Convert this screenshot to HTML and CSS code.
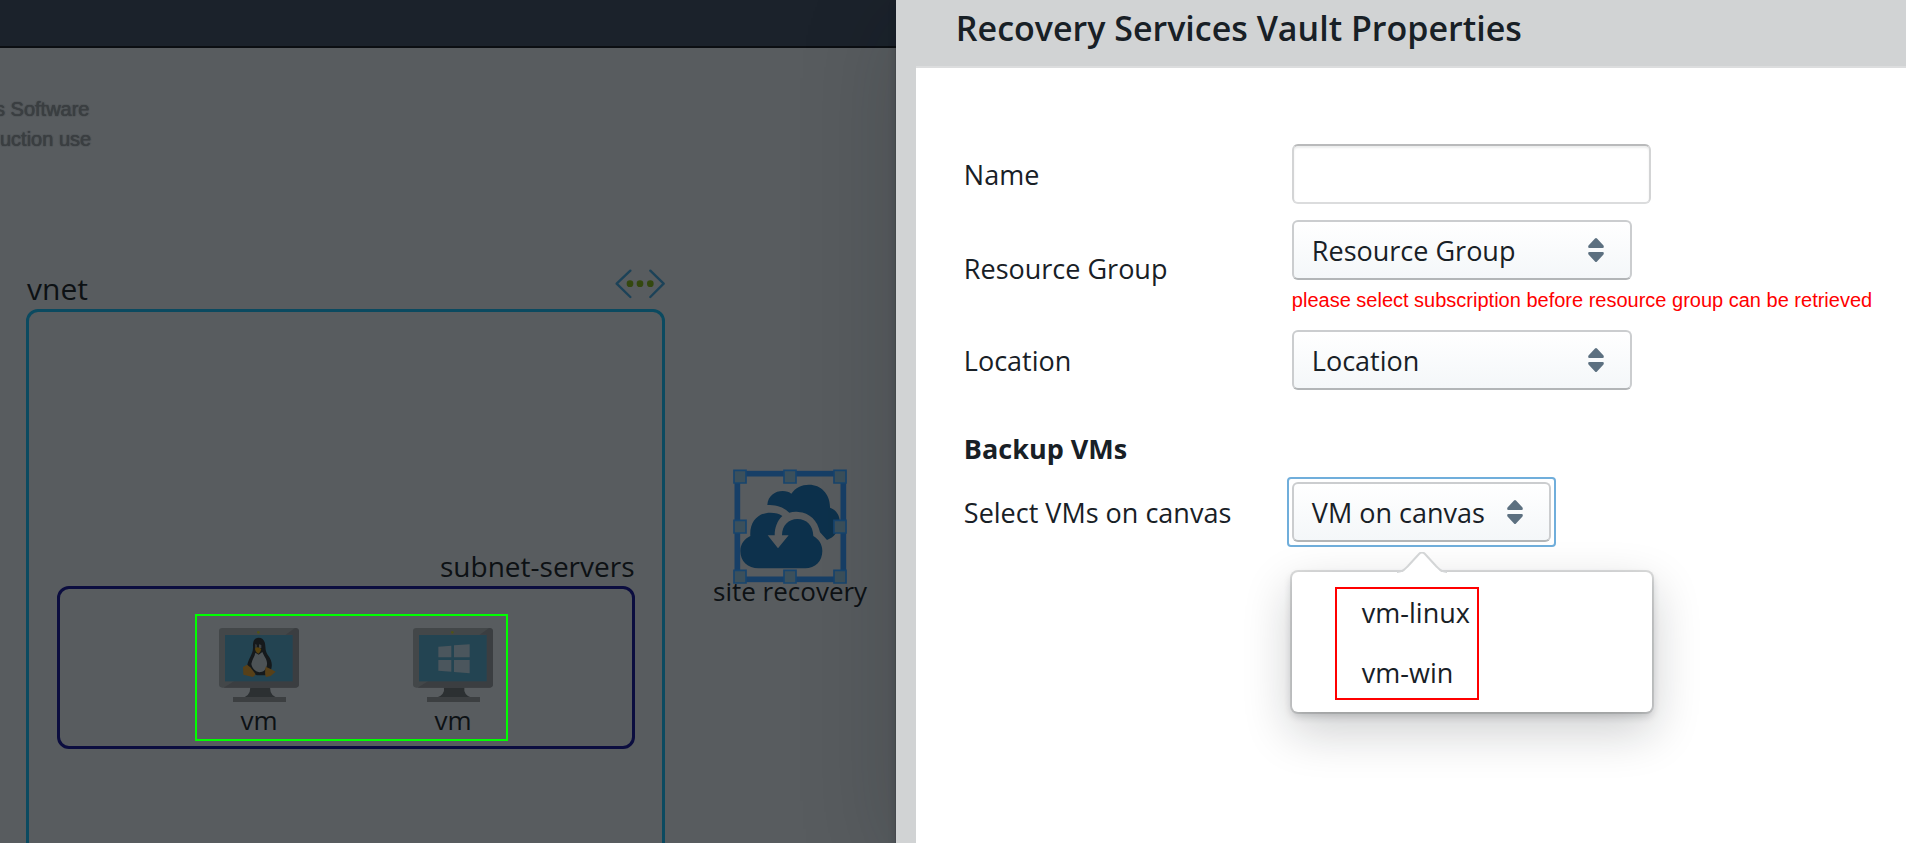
FILE: index.html
```html
<!DOCTYPE html>
<html lang="en">
<head>
<meta charset="utf-8">
<title>Recovery Services Vault Properties</title>
<link rel="stylesheet" href="styles.css">
</head>
<body>
<svg class="symbols" aria-hidden="true">
  <symbol id="caret" viewBox="0 0 16 24">
    <path d="M7 .6Q8-.4 9 .6L15.500 7.500Q16.500 10 14.500 10H1.500Q-.5 10 .5 7.500ZM7 23.400Q8 24.400 9 23.400L15.500 16.500Q16.500 14 14.500 14H1.500Q-.5 14 .5 16.500Z"/>
  </symbol>
  <symbol id="monitor" viewBox="0 0 240 222">
    <path fill="#2c3032" d="M93 176H154Q150 202 178 210H68Q97 202 93 176Z"/>
    <path fill="#3c3f41" d="M42 207H201V222H42Z"/>
    <rect fill="#434749" width="240" height="179" rx="10"/>
    <path fill="#3b3e41" d="M228 0Q240 0 240 12V167Q240 179 228 179H14L45 160H220V20H200Z"/>
    <rect fill="#234452" x="18" y="21" width="203" height="139"/>
    <circle fill="#505418" cx="118" cy="13" r="4"/>
  </symbol>
</svg>

<div class="app">
  <main class="workspace">
    <header class="topbar"></header>
    <div class="canvas">
      <p class="watermark watermark-first">s Software</p>
      <p class="watermark watermark-second">uction use</p>

      <div class="node-label vnet-label">vnet</div>
      <svg class="vnet-icon" viewBox="0 0 150 90" aria-hidden="true">
        <path d="M46 5L5 44L46 84M106 5L146 44L106 84" fill="none" stroke="#1c4258" stroke-width="7" stroke-linecap="round" stroke-linejoin="round"/>
        <g fill="#34480f"><circle cx="45" cy="44" r="10"/><circle cx="75" cy="44" r="10"/><circle cx="106" cy="44" r="10"/></g>
      </svg>
      <div class="vnet"></div>

      <div class="node-label subnet-label">subnet-servers</div>
      <div class="subnet"></div>

      <div class="vm vm-linux">
        <svg viewBox="0 0 240 222" aria-hidden="true">
          <use href="#monitor"/>
          <path fill="#15191b" d="M119 29C105 29 101 42 102 57C103 78 87 92 85 112L92 133L114 142H139L154 130C163 110 157 95 148 83C137 70 141 58 137 43C134 34 129 29 119 29Z"/>
          <path fill="#4d5356" d="M109 74L119 80L130 72C136 88 148 96 143 115C139 127 134 132 121 133C104 129 99 118 97 108C99 94 107 87 109 74Z"/>
          <path fill="#3f4447" d="M109 48L113 50V60H109ZM120 49L127 51V60H120Z"/>
          <path fill="#57420f" d="M108 61Q117 54 127 63Q125 73 118 77Q108 73 108 61Z"/>
          <path fill="#574018" d="M72 117L84 110L94 118L109 137Q110 144 101 147L73 140ZM140 116L155 123L170 131L155 144L141 147Q136 140 140 116Z"/>
        </svg>
        <span>vm</span>
      </div>
      <div class="vm vm-windows">
        <svg viewBox="0 0 240 222" aria-hidden="true">
          <use href="#monitor"/>
          <path fill="#4b565d" d="M76 56L115 53V88H76ZM123 52L170 49V88H123ZM76 96H115V131L76 128ZM123 96H170V136L123 132Z"/>
        </svg>
        <span>vm</span>
      </div>

      <svg class="recovery-icon" viewBox="99 57 345 345" aria-hidden="true">
        <g fill="#0d314c">
          <path d="M202 165C204 137 226 123 248 123C259 123 268 126 274 131C286 113 305 104 327 104C363 104 391 132 390 173C410 181 421 198 419 219C417 244 402 262 381 270L360 247C353 212 329 188 295 186C284 185 276 186 268 188C249 170 228 165 202 165Z"/>
          <path d="M151 258C148 214 175 188 211 188C226 188 238 191 247 198C232 212 224 232 224 256H203L234 295L266 256H246C246 226 266 207 292 207C320 207 339 226 340 258C356 267 367 283 367 303C367 333 346 355 315 355H176C143 355 121 333 121 303C121 283 133 266 151 258Z"/>
        </g>
        <rect x="112" y="71" width="318" height="317" fill="none" stroke="#173f67" stroke-width="17"/>
        <g fill="#3c505b" stroke="#17456f" stroke-width="5">
          <path d="M102 61h36v38h-36zM252 61h36v38h-36zM402 61h36v38h-36zM102 211h36v38h-36zM402 211h36v38h-36zM102 361h36v38h-36zM252 361h36v38h-36zM402 361h36v38h-36z"/>
        </g>
      </svg>
      <div class="node-label recovery-label">site recovery</div>

      <div class="highlight"></div>
    </div>
  </main>

  <aside class="drawer">
    <header class="drawer-header"><h1>Recovery Services Vault Properties</h1></header>
    <form class="drawer-body">
      <div class="row">
        <label for="name">Name</label>
        <input id="name" type="text">
      </div>
      <div class="row">
        <label for="group">Resource Group</label>
        <div class="field">
          <div class="select">
            <select id="group"><option>Resource Group</option></select>
            <svg class="caret" aria-hidden="true"><use href="#caret"/></svg>
          </div>
          <p class="error">please select subscription before resource group can be retrieved</p>
        </div>
      </div>
      <div class="row">
        <label for="location">Location</label>
        <div class="select">
          <select id="location"><option>Location</option></select>
          <svg class="caret" aria-hidden="true"><use href="#caret"/></svg>
        </div>
      </div>
      <h2>Backup VMs</h2>
      <div class="row">
        <label for="vms">Select VMs on canvas</label>
        <div class="picker">
          <button class="picker-button" id="vms" type="button" aria-haspopup="true" aria-expanded="true">VM on canvas
            <svg class="caret" aria-hidden="true"><use href="#caret"/></svg>
          </button>
          <div class="popover">
            <svg class="popover-arrow" viewBox="0 0 50 21" aria-hidden="true">
              <path class="arrow-fill" d="M0 21C6 21 8 18 11 15L22 3Q25 0 28 3L39 15C42 18 44 21 50 21Z"/>
              <path class="arrow-line" d="M0 20C6 20 8 17 11 14L22 2Q25-1 28 2L39 14C42 17 44 20 50 20"/>
            </svg>
            <div class="options">
              <button type="button">vm-linux</button>
              <button type="button">vm-win</button>
            </div>
          </div>
        </div>
      </div>
    </form>
  </aside>
</div>
</body>
</html>
```
FILE: styles.css
```css
* { box-sizing: border-box; }

body {
  margin: 0;
  font-family: "Open Sans", "Noto Sans", sans-serif;
  font-size: 27px;
  color: #182026;
}

h1, h2, p { margin: 0; }

.symbols { position: absolute; width: 0; height: 0; }

.app {
  display: flex;
  height: 100vh;
  overflow: hidden;
}

/* Diagram side, dimmed behind the drawer */
.workspace {
  flex: 1;
  min-width: 0;
  display: flex;
  flex-direction: column;
  background: #585c5f;
  color: #0d1114;
}

.topbar {
  height: 48px;
  background: #1b222b;
  border-bottom: 2px solid #0b0e12;
}

.canvas {
  position: relative;
  flex: 1;
  overflow: hidden;
}

.canvas > * { position: absolute; }

.watermark {
  font: 20px/30px "Liberation Sans", Arial, sans-serif;
  color: #3a3e41;
  text-shadow: 0 0 1px #3a3e41, 0 0 1px #3a3e41;
  white-space: nowrap;
}
.watermark-first { left: -5px; top: 46px; }
.watermark-second { left: 0; top: 76px; }

.node-label { line-height: 40px; white-space: nowrap; }

.vnet-label { left: 27px; top: 221px; font-size: 30px; }
.vnet-icon { left: 615px; top: 221px; width: 50px; height: 30px; }
.vnet {
  left: 26px;
  top: 261px;
  width: 639px;
  height: 700px;
  border: 3px solid #0b4a60;
  border-radius: 12px;
}

.subnet-label { left: 440px; top: 498px; font-size: 28px; }
.subnet {
  left: 57px;
  top: 538px;
  width: 578px;
  height: 163px;
  border: 3px solid #0b0d3f;
  border-radius: 12px;
}

.vm {
  top: 580px;
  width: 80px;
  display: flex;
  flex-direction: column;
  align-items: center;
  font-size: 26px;
  line-height: 36px;
}
.vm svg { width: 80px; height: 74px; }
.vm-linux { left: 219px; }
.vm-windows { left: 413px; }

.recovery-icon { left: 733px; top: 421px; width: 115px; height: 115px; }
.recovery-label { left: 713px; top: 523px; font-size: 26px; }

.highlight {
  left: 195px;
  top: 566px;
  width: 313px;
  height: 127px;
  border: 2px solid #00ff00;
}

/* Properties drawer */
.drawer {
  position: relative;
  width: 53%;
  display: flex;
  flex-direction: column;
  padding-left: 20px;
  background: #d1d3d4;
  box-shadow: 0 0 0 1px rgba(16, 22, 26, .1), 0 4px 8px rgba(16, 22, 26, .2), 0 18px 92px rgba(16, 22, 26, .2);
}

/* The diagram highlight stays undimmed */
.drawer-header {
  padding: 0 40px 10px;
  border-bottom: 2px solid #dcddde;
}

h1 {
  font-size: 34px;
  font-weight: 600;
  line-height: 56px;
}

.drawer-body {
  flex: 1;
  padding: 76px 16px 0 48px;
  background: #fff;
}

.row {
  display: grid;
  grid-template-columns: 328px 1fr;
  align-items: center;
  justify-items: start;
  margin-bottom: 16px;
}

.row:nth-child(2) { margin-bottom: 14px; }

h2 {
  margin: 40px 0 14px;
  font-size: 27px;
  font-weight: 700;
  line-height: 38px;
}

input, select, .picker-button {
  height: 60px;
  border: 2px solid #cbcdcf;
  border-radius: 6px;
  font: inherit;
  color: inherit;
}

input {
  width: 359px;
  padding: 0 18px;
  border-color: #b9babb #d3d4d5 #dbdcdd;
  background: #fff;
  box-shadow: inset 0 2px 2px rgba(16, 22, 26, .08);
}

select, .picker-button {
  appearance: none;
  border-bottom-color: #b2b5b7;
  background: linear-gradient(#fff, #f4f7f9);
}

.select { position: relative; width: 340px; }
.select select { display: block; width: 100%; padding: 0 56px 0 18px; }
.select .caret { position: absolute; right: 28px; top: 18px; pointer-events: none; }

.caret { width: 16px; height: 24px; fill: #5c7080; }

.error {
  padding-top: 4px;
  font: 20px/32px "Liberation Sans", Arial, sans-serif;
  color: #ff0000;
  white-space: nowrap;
}

.picker { position: relative; }

.picker-button {
  position: relative;
  display: flex;
  align-items: center;
  gap: 22px;
  padding: 0 26px 0 18px;
  outline: none;
}

/* Focus ring */
.picker-button::before {
  content: "";
  position: absolute;
  inset: -7px;
  border: 2px solid #70aedb;
  border-radius: 4px;
}

.popover {
  position: absolute;
  left: 0;
  top: 90px;
  width: 360px;
  padding: 10px 43px;
  border-radius: 6px;
  background: #fff;
  box-shadow: 0 0 0 2px rgba(16, 22, 26, .13), 0 4px 8px rgba(16, 22, 26, .2), 0 18px 48px 2px rgba(16, 22, 26, .2);
}

.popover-arrow {
  position: absolute;
  left: 105px;
  top: -20px;
  width: 50px;
  height: 21px;
}
.arrow-fill { fill: #fff; }
.arrow-line { fill: none; stroke: #d3d5d6; stroke-width: 2px; }

.options {
  position: relative;
  display: flex;
  flex-direction: column;
  width: 144px;
}

.options::after {
  content: "";
  position: absolute;
  inset: 5px 0 2px;
  border: 2px solid #ff0000;
  pointer-events: none;
}

.options button {
  height: 60px;
  padding: 0 0 0 27px;
  border: 0;
  background: none;
  font: inherit;
  color: inherit;
  text-align: left;
}
```
